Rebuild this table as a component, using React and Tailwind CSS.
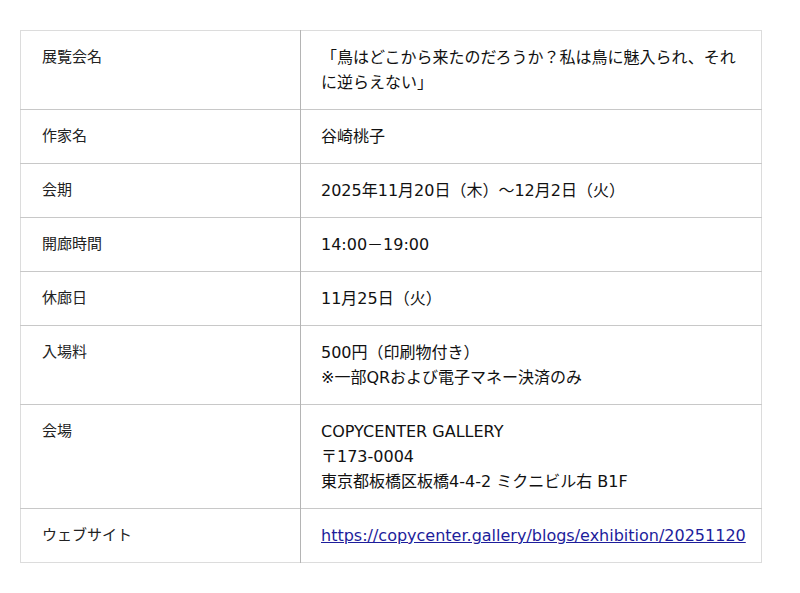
import React from 'react';

const rows = [
  { label: '展覧会名', value: ['「鳥はどこから来たのだろうか？私は鳥に魅入られ、それに逆らえない」'] },
  { label: '作家名', value: ['谷崎桃子'] },
  { label: '会期', value: ['2025年11月20日（木）～12月2日（火）'] },
  { label: '開廊時間', value: ['14:00－19:00'] },
  { label: '休廊日', value: ['11月25日（火）'] },
  { label: '入場料', value: ['500円（印刷物付き）', '※一部QRおよび電子マネー決済のみ'] },
  { label: '会場', value: ['COPYCENTER GALLERY', '〒173-0004', '東京都板橋区板橋4-4-2 ミクニビル右 B1F'] },
];

const url = 'https://copycenter.gallery/blogs/exhibition/20251120';

const App = () => {
  return (
    <div className="min-h-[593px] bg-white pt-[30px] pl-[20px] font-['DejaVu_Sans','Noto_Sans_CJK_JP',sans-serif] text-[#111]">
      <table className="w-[742px] border-collapse border border-[#dcdcdc] table-fixed">
        <tbody>
          {rows.map((row) => (
            <tr key={row.label} className="border-b border-[#c8c8c8] align-top">
              <td className="w-[280px] border-r border-[#b4b4b4] px-[21px] py-[14px] text-[15px] leading-[25px] text-[#222]">
                {row.label}
              </td>
              <td className="px-[20px] py-[14px] text-[16px] leading-[25px]">
                {row.value.map((line, i) => (
                  <div key={i}>{line}</div>
                ))}
              </td>
            </tr>
          ))}
          <tr className="align-top">
            <td className="w-[280px] border-r border-[#b4b4b4] px-[21px] py-[14px] text-[15px] leading-[25px] text-[#222]">
              ウェブサイト
            </td>
            <td className="px-[20px] py-[14px] text-[16px] leading-[25px] whitespace-nowrap">
              <a href={url} className="text-[#1d1d9b] underline">{url}</a>
            </td>
          </tr>
        </tbody>
      </table>
    </div>
  );
};

export default App;
